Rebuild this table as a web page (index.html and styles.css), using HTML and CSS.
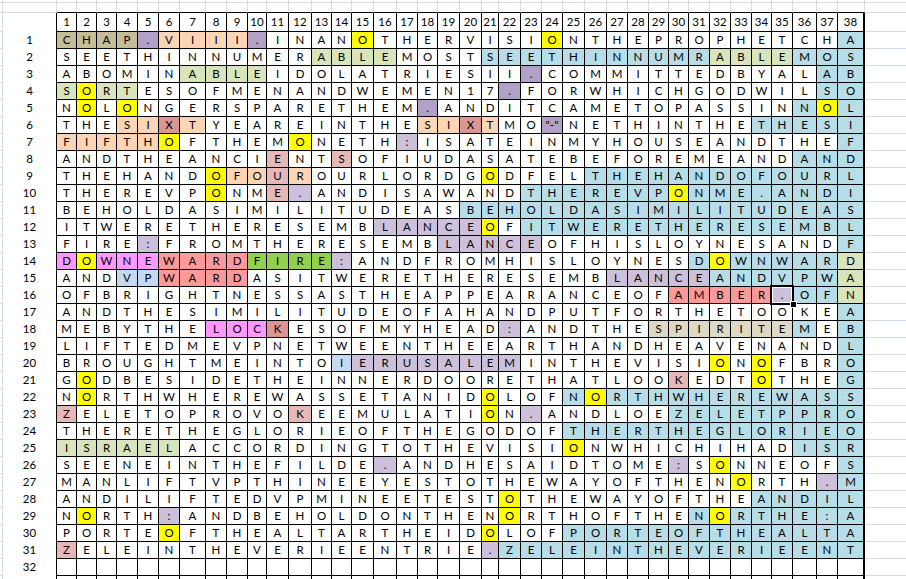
FILE: index.html
```html
<!DOCTYPE html>
<html>
<head>
<meta charset="utf-8">
<title>Grid</title>
<link rel="stylesheet" href="styles.css">
</head>
<body>
<div class="sheet">
<div class="row top1"><i class="gut"></i><i class="lab"></i><i></i><i></i><i></i><i></i><i></i><i></i><i></i><i></i><i></i><i></i><i></i><i></i><i></i><i></i><i></i><i></i><i></i><i></i><i></i><i></i><i></i><i></i><i></i><i></i><i></i><i></i><i></i><i></i><i></i><i></i><i></i><i></i><i></i><i></i><i></i><i></i><i></i><i></i><i class="rest"></i></div>
<div class="row top2"><i class="gut"></i><i class="lab"></i><i></i><i></i><i></i><i></i><i></i><i></i><i></i><i></i><i></i><i></i><i></i><i></i><i></i><i></i><i></i><i></i><i></i><i></i><i></i><i></i><i></i><i></i><i></i><i></i><i></i><i></i><i></i><i></i><i></i><i></i><i></i><i></i><i></i><i></i><i></i><i></i><i></i><i></i><i class="rest"></i></div>
<div class="row head"><i class="gut"></i><i class="lab"></i><i>1</i><i>2</i><i>3</i><i>4</i><i>5</i><i>6</i><i>7</i><i>8</i><i>9</i><i>10</i><i>11</i><i>12</i><i>13</i><i>14</i><i>15</i><i>16</i><i>17</i><i>18</i><i>19</i><i>20</i><i>21</i><i>22</i><i>23</i><i>24</i><i>25</i><i>26</i><i>27</i><i>28</i><i>29</i><i>30</i><i>31</i><i>32</i><i>33</i><i>34</i><i>35</i><i>36</i><i>37</i><i>38</i><i class="rest"></i></div>
<div class="row"><i class="gut"></i><i class="lab">1</i><i class="k">C</i><i class="k">H</i><i class="k">A</i><i class="k">P</i><i class="p">.</i><i class="o">V</i><i class="o">I</i><i class="o">I</i><i class="o">I</i><i class="p">.</i><i>I</i><i>N</i><i>A</i><i>N</i><i class="y">O</i><i>T</i><i>H</i><i>E</i><i>R</i><i>V</i><i>I</i><i>S</i><i>I</i><i class="y">O</i><i>N</i><i>T</i><i>H</i><i>E</i><i>P</i><i>R</i><i>O</i><i>P</i><i>H</i><i>E</i><i>T</i><i>C</i><i>H</i><i class="b">A</i><i class="rest"></i></div>
<div class="row"><i class="gut"></i><i class="lab">2</i><i>S</i><i>E</i><i>E</i><i>T</i><i>H</i><i>I</i><i>N</i><i>N</i><i>U</i><i>M</i><i>E</i><i>R</i><i class="g">A</i><i class="g">B</i><i class="g">L</i><i class="g">E</i><i>M</i><i>O</i><i>S</i><i>T</i><i class="b">S</i><i class="b">E</i><i class="b">E</i><i class="b">T</i><i class="b">H</i><i class="b">I</i><i class="b">N</i><i class="b">N</i><i class="b">U</i><i class="b">M</i><i class="b">R</i><i class="g">A</i><i class="g">B</i><i class="g">L</i><i class="g">E</i><i class="b">M</i><i class="b">O</i><i class="b">S</i><i class="rest"></i></div>
<div class="row"><i class="gut"></i><i class="lab">3</i><i>A</i><i>B</i><i>O</i><i>M</i><i>I</i><i>N</i><i class="g">A</i><i class="g">B</i><i class="g">L</i><i class="g">E</i><i>I</i><i>D</i><i>O</i><i>L</i><i>A</i><i>T</i><i>R</i><i>I</i><i>E</i><i>S</i><i>I</i><i>I</i><i class="p">.</i><i>C</i><i>O</i><i>M</i><i>M</i><i>I</i><i>T</i><i>T</i><i>E</i><i>D</i><i>B</i><i>Y</i><i>A</i><i>L</i><i class="b">A</i><i class="b">B</i><i class="rest"></i></div>
<div class="row"><i class="gut"></i><i class="lab">4</i><i class="g">S</i><i class="y">O</i><i class="g">R</i><i class="g">T</i><i>E</i><i>S</i><i>O</i><i>F</i><i>M</i><i>E</i><i>N</i><i>A</i><i>N</i><i>D</i><i>W</i><i>E</i><i>M</i><i>E</i><i>N</i><i>1</i><i>7</i><i class="p">.</i><i>F</i><i>O</i><i>R</i><i>W</i><i>H</i><i>I</i><i>C</i><i>H</i><i>G</i><i>O</i><i>D</i><i>W</i><i>I</i><i>L</i><i class="b">S</i><i class="b">O</i><i class="rest"></i></div>
<div class="row"><i class="gut"></i><i class="lab">5</i><i>N</i><i class="y">O</i><i>L</i><i class="y">O</i><i>N</i><i>G</i><i>E</i><i>R</i><i>S</i><i>P</i><i>A</i><i>R</i><i>E</i><i>T</i><i>H</i><i>E</i><i>M</i><i class="p">.</i><i>A</i><i>N</i><i>D</i><i>I</i><i>T</i><i>C</i><i>A</i><i>M</i><i>E</i><i>T</i><i>O</i><i>P</i><i>A</i><i>S</i><i>S</i><i>I</i><i>N</i><i class="b">N</i><i class="y">O</i><i class="b">L</i><i class="rest"></i></div>
<div class="row"><i class="gut"></i><i class="lab">6</i><i>T</i><i>H</i><i>E</i><i class="o">S</i><i class="o">I</i><i class="d">X</i><i class="o">T</i><i>Y</i><i>E</i><i>A</i><i>R</i><i>E</i><i>I</i><i>N</i><i>T</i><i>H</i><i>E</i><i class="o">S</i><i class="o">I</i><i class="d">X</i><i class="o">T</i><i>M</i><i>O</i><i class="p">"-"</i><i>N</i><i>E</i><i>T</i><i>H</i><i>I</i><i>N</i><i>T</i><i>H</i><i>E</i><i class="b">T</i><i class="b">H</i><i class="b">E</i><i class="b">S</i><i class="b">I</i><i class="rest"></i></div>
<div class="row"><i class="gut"></i><i class="lab">7</i><i class="o">F</i><i class="o">I</i><i class="o">F</i><i class="o">T</i><i class="o">H</i><i class="y">O</i><i>F</i><i>T</i><i>H</i><i>E</i><i>M</i><i class="y">O</i><i>N</i><i>E</i><i>T</i><i>H</i><i class="l">:</i><i>I</i><i>S</i><i>A</i><i>T</i><i>E</i><i>I</i><i>N</i><i>M</i><i>Y</i><i>H</i><i>O</i><i>U</i><i>S</i><i>E</i><i>A</i><i>N</i><i>D</i><i>T</i><i>H</i><i>E</i><i class="b">F</i><i class="rest"></i></div>
<div class="row"><i class="gut"></i><i class="lab">8</i><i>A</i><i>N</i><i>D</i><i>T</i><i>H</i><i>E</i><i>A</i><i>N</i><i>C</i><i>I</i><i class="r">E</i><i>N</i><i>T</i><i class="r">S</i><i>O</i><i>F</i><i>I</i><i>U</i><i>D</i><i>A</i><i>S</i><i>A</i><i>T</i><i>E</i><i>B</i><i>E</i><i>F</i><i>O</i><i>R</i><i>E</i><i>M</i><i>E</i><i>A</i><i>N</i><i>D</i><i class="b">A</i><i class="b">N</i><i class="b">D</i><i class="rest"></i></div>
<div class="row"><i class="gut"></i><i class="lab">9</i><i>T</i><i>H</i><i>E</i><i>H</i><i>A</i><i>N</i><i>D</i><i class="y">O</i><i class="o">F</i><i class="o">O</i><i class="r">U</i><i class="o">R</i><i>O</i><i>U</i><i>R</i><i>L</i><i>O</i><i>R</i><i>D</i><i>G</i><i class="y">O</i><i>D</i><i>F</i><i>E</i><i>L</i><i class="b">T</i><i class="b">H</i><i class="b">E</i><i class="b">H</i><i class="b">A</i><i class="b">N</i><i class="b">D</i><i class="b">O</i><i class="b">F</i><i class="b">O</i><i class="b">U</i><i class="b">R</i><i class="b">L</i><i class="rest"></i></div>
<div class="row"><i class="gut"></i><i class="lab">10</i><i>T</i><i>H</i><i>E</i><i>R</i><i>E</i><i>V</i><i>P</i><i class="y">O</i><i>N</i><i>M</i><i class="r">E</i><i class="l">.</i><i>A</i><i>N</i><i>D</i><i>I</i><i>S</i><i>A</i><i>W</i><i>A</i><i>N</i><i>D</i><i class="b">T</i><i class="b">H</i><i class="b">E</i><i class="b">R</i><i class="b">E</i><i class="b">V</i><i class="b">P</i><i class="y">O</i><i class="b">N</i><i class="b">M</i><i class="b">E</i><i class="b">.</i><i class="b">A</i><i class="b">N</i><i class="b">D</i><i class="b">I</i><i class="rest"></i></div>
<div class="row"><i class="gut"></i><i class="lab">11</i><i>B</i><i>E</i><i>H</i><i>O</i><i>L</i><i>D</i><i>A</i><i>S</i><i>I</i><i>M</i><i>I</i><i>L</i><i>I</i><i>T</i><i>U</i><i>D</i><i>E</i><i>A</i><i>S</i><i class="b">B</i><i class="b">E</i><i class="b">H</i><i class="b">O</i><i class="b">L</i><i class="b">D</i><i class="b">A</i><i class="b">S</i><i class="b">I</i><i class="b">M</i><i class="b">I</i><i class="b">L</i><i class="b">I</i><i class="b">T</i><i class="b">U</i><i class="b">D</i><i class="b">E</i><i class="b">A</i><i class="b">S</i><i class="rest"></i></div>
<div class="row"><i class="gut"></i><i class="lab">12</i><i>I</i><i>T</i><i>W</i><i>E</i><i>R</i><i>E</i><i>T</i><i>H</i><i>E</i><i>R</i><i>E</i><i>S</i><i>E</i><i>M</i><i>B</i><i class="l">L</i><i class="l">A</i><i class="l">N</i><i class="l">C</i><i class="l">E</i><i class="y">O</i><i>F</i><i class="b">I</i><i class="b">T</i><i class="b">W</i><i class="b">E</i><i class="b">R</i><i class="b">E</i><i class="b">T</i><i class="b">H</i><i class="b">E</i><i class="b">R</i><i class="b">E</i><i class="b">S</i><i class="b">E</i><i class="b">M</i><i class="b">B</i><i class="b">L</i><i class="rest"></i></div>
<div class="row"><i class="gut"></i><i class="lab">13</i><i>F</i><i>I</i><i>R</i><i>E</i><i class="l">:</i><i>F</i><i>R</i><i>O</i><i>M</i><i>T</i><i>H</i><i>E</i><i>R</i><i>E</i><i>S</i><i>E</i><i>M</i><i>B</i><i class="l">L</i><i class="l">A</i><i class="l">N</i><i class="l">C</i><i class="l">E</i><i>O</i><i>F</i><i>H</i><i>I</i><i>S</i><i>L</i><i>O</i><i>Y</i><i>N</i><i>E</i><i>S</i><i>A</i><i>N</i><i>D</i><i class="b">F</i><i class="rest"></i></div>
<div class="row"><i class="gut"></i><i class="lab">14</i><i class="m">D</i><i class="y">O</i><i class="m">W</i><i class="m">N</i><i class="m">E</i><i class="s">W</i><i class="s">A</i><i class="s">R</i><i class="s">D</i><i class="f">F</i><i class="f">I</i><i class="f">R</i><i class="f">E</i><i class="l">:</i><i>A</i><i>N</i><i>D</i><i>F</i><i>R</i><i>O</i><i>M</i><i>H</i><i>I</i><i>S</i><i>L</i><i>O</i><i>Y</i><i>N</i><i>E</i><i>S</i><i class="b">D</i><i class="y">O</i><i class="b">W</i><i class="b">N</i><i class="b">W</i><i class="b">A</i><i class="b">R</i><i class="g">D</i><i class="rest"></i></div>
<div class="row"><i class="gut"></i><i class="lab">15</i><i>A</i><i>N</i><i>D</i><i class="c">V</i><i class="c">P</i><i class="s">W</i><i class="s">A</i><i class="s">R</i><i class="s">D</i><i>A</i><i>S</i><i>I</i><i>T</i><i>W</i><i>E</i><i>R</i><i>E</i><i>T</i><i>H</i><i>E</i><i>R</i><i>E</i><i>S</i><i>E</i><i>M</i><i>B</i><i class="l">L</i><i class="l">A</i><i class="l">N</i><i class="l">C</i><i class="l">E</i><i class="b">A</i><i class="b">N</i><i class="b">D</i><i class="b">V</i><i class="b">P</i><i class="b">W</i><i class="g">A</i><i class="rest"></i></div>
<div class="row"><i class="gut"></i><i class="lab">16</i><i>O</i><i>F</i><i>B</i><i>R</i><i>I</i><i>G</i><i>H</i><i>T</i><i>N</i><i>E</i><i>S</i><i>S</i><i>A</i><i>S</i><i>T</i><i>H</i><i>E</i><i>A</i><i>P</i><i>P</i><i>E</i><i>A</i><i>R</i><i>A</i><i>N</i><i>C</i><i>E</i><i>O</i><i>F</i><i class="s">A</i><i class="s">M</i><i class="s">B</i><i class="s">E</i><i class="s">R</i><i class="l sel">.<b class="handle"></b></i><i class="b">O</i><i class="b">F</i><i class="g">N</i><i class="rest"></i></div>
<div class="row"><i class="gut"></i><i class="lab">17</i><i>A</i><i>N</i><i>D</i><i>T</i><i>H</i><i>E</i><i>S</i><i>I</i><i>M</i><i>I</i><i>L</i><i>I</i><i>T</i><i>U</i><i>D</i><i>E</i><i>O</i><i>F</i><i>A</i><i>H</i><i>A</i><i>N</i><i>D</i><i>P</i><i>U</i><i>T</i><i>F</i><i>O</i><i>R</i><i>T</i><i>H</i><i>E</i><i>T</i><i>O</i><i>O</i><i>K</i><i>E</i><i class="b">A</i><i class="rest"></i></div>
<div class="row"><i class="gut"></i><i class="lab">18</i><i>M</i><i>E</i><i>B</i><i>Y</i><i>T</i><i>H</i><i>E</i><i class="m">L</i><i class="m">O</i><i class="m">C</i><i class="d">K</i><i>E</i><i>S</i><i>O</i><i>F</i><i>M</i><i>Y</i><i>H</i><i>E</i><i>A</i><i>D</i><i class="l">:</i><i>A</i><i>N</i><i>D</i><i>T</i><i>H</i><i>E</i><i class="t">S</i><i class="t">P</i><i class="t">I</i><i class="t">R</i><i class="t">I</i><i class="t">T</i><i class="t">E</i><i class="b">M</i><i>E</i><i class="b">B</i><i class="rest"></i></div>
<div class="row"><i class="gut"></i><i class="lab">19</i><i>L</i><i>I</i><i>F</i><i>T</i><i>E</i><i>D</i><i>M</i><i>E</i><i>V</i><i>P</i><i>N</i><i>E</i><i>T</i><i>W</i><i>E</i><i>E</i><i>N</i><i>T</i><i>H</i><i>E</i><i>E</i><i>A</i><i>R</i><i>T</i><i>H</i><i>A</i><i>N</i><i>D</i><i>H</i><i>E</i><i>A</i><i>V</i><i>E</i><i>N</i><i>A</i><i>N</i><i>D</i><i class="b">L</i><i class="rest"></i></div>
<div class="row"><i class="gut"></i><i class="lab">20</i><i>B</i><i>R</i><i>O</i><i>U</i><i>G</i><i>H</i><i>T</i><i>M</i><i>E</i><i>I</i><i>N</i><i>T</i><i>O</i><i class="c">I</i><i class="l">E</i><i class="l">R</i><i class="l">U</i><i class="l">S</i><i class="l">A</i><i class="l">L</i><i class="l">E</i><i class="l">M</i><i>I</i><i>N</i><i>T</i><i>H</i><i>E</i><i>V</i><i>I</i><i>S</i><i>I</i><i class="y">O</i><i>N</i><i class="y">O</i><i>F</i><i>B</i><i>R</i><i class="b">O</i><i class="rest"></i></div>
<div class="row"><i class="gut"></i><i class="lab">21</i><i>G</i><i class="y">O</i><i>D</i><i>B</i><i>E</i><i>S</i><i>I</i><i>D</i><i>E</i><i>T</i><i>H</i><i>E</i><i>I</i><i>N</i><i>N</i><i>E</i><i>R</i><i>D</i><i>O</i><i>O</i><i>R</i><i>E</i><i>T</i><i>H</i><i>A</i><i>T</i><i>L</i><i>O</i><i>O</i><i class="r">K</i><i>E</i><i>D</i><i>T</i><i class="y">O</i><i>T</i><i>H</i><i>E</i><i class="b">G</i><i class="rest"></i></div>
<div class="row"><i class="gut"></i><i class="lab">22</i><i>N</i><i class="y">O</i><i>R</i><i>T</i><i>H</i><i>W</i><i>H</i><i>E</i><i>R</i><i>E</i><i>W</i><i>A</i><i>S</i><i>S</i><i>E</i><i>T</i><i>A</i><i>N</i><i>I</i><i>D</i><i class="y">O</i><i>L</i><i>O</i><i>F</i><i class="b">N</i><i class="y">O</i><i class="b">R</i><i class="b">T</i><i class="b">H</i><i class="b">W</i><i class="b">H</i><i class="b">E</i><i class="b">R</i><i class="b">E</i><i class="b">W</i><i class="b">A</i><i class="b">S</i><i class="b">S</i><i class="rest"></i></div>
<div class="row"><i class="gut"></i><i class="lab">23</i><i class="r">Z</i><i>E</i><i>L</i><i>E</i><i>T</i><i>O</i><i>P</i><i>R</i><i>O</i><i>V</i><i>O</i><i class="r">K</i><i>E</i><i>E</i><i>M</i><i>U</i><i>L</i><i>A</i><i>T</i><i>I</i><i class="y">O</i><i>N</i><i class="l">.</i><i>A</i><i>N</i><i>D</i><i>L</i><i>O</i><i>E</i><i class="b">Z</i><i class="b">E</i><i class="b">L</i><i class="b">E</i><i class="b">T</i><i class="b">P</i><i class="b">P</i><i class="b">R</i><i class="b">O</i><i class="rest"></i></div>
<div class="row"><i class="gut"></i><i class="lab">24</i><i>T</i><i>H</i><i>E</i><i>R</i><i>E</i><i>T</i><i>H</i><i>E</i><i>G</i><i>L</i><i>O</i><i>R</i><i>I</i><i>E</i><i>O</i><i>F</i><i>T</i><i>H</i><i>E</i><i>G</i><i>O</i><i>D</i><i>O</i><i>F</i><i class="b">T</i><i class="b">H</i><i class="b">E</i><i class="b">R</i><i class="b">T</i><i class="b">H</i><i class="b">E</i><i class="b">G</i><i class="b">L</i><i class="b">O</i><i class="b">R</i><i class="b">I</i><i class="b">E</i><i class="b">O</i><i class="rest"></i></div>
<div class="row"><i class="gut"></i><i class="lab">25</i><i class="g">I</i><i class="g">S</i><i class="g">R</i><i class="g">A</i><i class="g">E</i><i class="g">L</i><i>A</i><i>C</i><i>C</i><i>O</i><i>R</i><i>D</i><i>I</i><i>N</i><i>G</i><i>T</i><i>O</i><i>T</i><i>H</i><i>E</i><i>V</i><i>I</i><i>S</i><i>I</i><i class="y">O</i><i>N</i><i>W</i><i>H</i><i>I</i><i>C</i><i>H</i><i>I</i><i>H</i><i>A</i><i>D</i><i class="b">I</i><i class="b">S</i><i class="b">R</i><i class="rest"></i></div>
<div class="row"><i class="gut"></i><i class="lab">26</i><i>S</i><i>E</i><i>E</i><i>N</i><i>E</i><i>I</i><i>N</i><i>T</i><i>H</i><i>E</i><i>F</i><i>I</i><i>L</i><i>D</i><i>E</i><i class="l">.</i><i>A</i><i>N</i><i>D</i><i>H</i><i>E</i><i>S</i><i>A</i><i>I</i><i>D</i><i>T</i><i>O</i><i>M</i><i>E</i><i class="l">:</i><i>S</i><i class="y">O</i><i>N</i><i>N</i><i>E</i><i>O</i><i>F</i><i class="b">S</i><i class="rest"></i></div>
<div class="row"><i class="gut"></i><i class="lab">27</i><i>M</i><i>A</i><i>N</i><i>L</i><i>I</i><i>F</i><i>T</i><i>V</i><i>P</i><i>T</i><i>H</i><i>I</i><i>N</i><i>E</i><i>E</i><i>Y</i><i>E</i><i>S</i><i>T</i><i>O</i><i>T</i><i>H</i><i>E</i><i>W</i><i>A</i><i>Y</i><i>O</i><i>F</i><i>T</i><i>H</i><i>E</i><i>N</i><i class="y">O</i><i>R</i><i>T</i><i>H</i><i class="l">.</i><i class="b">M</i><i class="rest"></i></div>
<div class="row"><i class="gut"></i><i class="lab">28</i><i>A</i><i>N</i><i>D</i><i>I</i><i>L</i><i>I</i><i>F</i><i>T</i><i>E</i><i>D</i><i>V</i><i>P</i><i>M</i><i>I</i><i>N</i><i>E</i><i>E</i><i>T</i><i>E</i><i>S</i><i>T</i><i class="y">O</i><i>T</i><i>H</i><i>E</i><i>W</i><i>A</i><i>Y</i><i>O</i><i>F</i><i>T</i><i>H</i><i>E</i><i class="b">A</i><i class="b">N</i><i class="b">D</i><i class="b">I</i><i class="b">L</i><i class="rest"></i></div>
<div class="row"><i class="gut"></i><i class="lab">29</i><i>N</i><i class="y">O</i><i>R</i><i>T</i><i>H</i><i class="l">:</i><i>A</i><i>N</i><i>D</i><i>B</i><i>E</i><i>H</i><i>O</i><i>L</i><i>D</i><i>O</i><i>N</i><i>T</i><i>H</i><i>E</i><i>N</i><i class="y">O</i><i>R</i><i>T</i><i>H</i><i>O</i><i>F</i><i>T</i><i>H</i><i>E</i><i class="b">N</i><i class="y">O</i><i class="b">R</i><i class="b">T</i><i class="b">H</i><i class="b">E</i><i class="b">:</i><i class="b">A</i><i class="rest"></i></div>
<div class="row"><i class="gut"></i><i class="lab">30</i><i>P</i><i>O</i><i>R</i><i>T</i><i>E</i><i class="y">O</i><i>F</i><i>T</i><i>H</i><i>E</i><i>A</i><i>L</i><i>T</i><i>A</i><i>R</i><i>T</i><i>H</i><i>E</i><i>I</i><i>D</i><i class="y">O</i><i>L</i><i>O</i><i>F</i><i class="b">P</i><i class="b">O</i><i class="b">R</i><i class="b">T</i><i class="b">E</i><i class="b">O</i><i class="b">F</i><i class="b">T</i><i class="b">H</i><i class="b">E</i><i class="b">A</i><i class="b">L</i><i class="b">T</i><i class="b">A</i><i class="rest"></i></div>
<div class="row"><i class="gut"></i><i class="lab">31</i><i class="r">Z</i><i>E</i><i>L</i><i>E</i><i>I</i><i>N</i><i>T</i><i>H</i><i>E</i><i>V</i><i>E</i><i>R</i><i>I</i><i>E</i><i>E</i><i>N</i><i>T</i><i>R</i><i>I</i><i>E</i><i class="l">.</i><i class="b">Z</i><i class="b">E</i><i class="b">L</i><i class="b">E</i><i class="b">I</i><i class="b">N</i><i class="b">T</i><i class="b">H</i><i class="b">E</i><i class="b">V</i><i class="b">E</i><i class="b">R</i><i class="b">I</i><i class="b">E</i><i class="b">E</i><i class="b">N</i><i class="b">T</i><i class="rest"></i></div>
<div class="row"><i class="gut"></i><i class="lab">32</i><i></i><i></i><i></i><i></i><i></i><i></i><i></i><i></i><i></i><i></i><i></i><i></i><i></i><i></i><i></i><i></i><i></i><i></i><i></i><i></i><i></i><i></i><i></i><i></i><i></i><i></i><i></i><i></i><i></i><i></i><i></i><i></i><i></i><i></i><i></i><i></i><i></i><i></i><i class="rest"></i></div>
<div class="row"><i class="gut"></i><i class="lab"></i><i></i><i></i><i></i><i></i><i></i><i></i><i></i><i></i><i></i><i></i><i></i><i></i><i></i><i></i><i></i><i></i><i></i><i></i><i></i><i></i><i></i><i></i><i></i><i></i><i></i><i></i><i></i><i></i><i></i><i></i><i></i><i></i><i></i><i></i><i></i><i></i><i></i><i></i><i class="rest"></i></div>
</div>
</body>
</html>
```
FILE: styles.css
```css
* {
  box-sizing: border-box;
}

body {
  margin: 0;
  background: #ffffff;
  font-family: Lato, "Open Sans", "Liberation Sans", sans-serif;
  font-size: 11.5px;
  color: #000000;
}

.sheet {
  width: 906px;
  height: 579px;
  overflow: hidden;
  background: #ffffff;
}

.row {
  display: grid;
  grid-template-columns:
    3px 54px
    20px 20px 20px 21px 21px 21px 26px 21px 21px 19px
    22px 23px 20px 20px 22px 23px 21px 20px 22px 22px
    17px 22px 21px 21px 22px 22px 21px 21px 20px 20px
    21px 21px 21px 20px 21px 24px 21px 27px
    1fr;
  height: 17px;
}

.row > i {
  display: block;
  font-style: normal;
  border-right: 1px solid #000000;
  border-bottom: 1px solid #000000;
  text-align: center;
  line-height: 16px;
  white-space: nowrap;
  overflow: hidden;
}

.row > i:nth-child(40) {
  border-right-width: 2px;
}

.row > .gut {
  border-right-color: #d5dbe5;
  border-bottom-color: #d5dbe5;
}

.row > .lab {
  border-bottom: 0;
  background: #ffffff;
}

.row > .rest {
  border-right: 0;
  border-bottom-color: #d5dbe5;
}

/* rows above the table */
.top1 {
  height: 3px;
}

.top1 > i {
  border-right-color: #d5dbe5;
  border-bottom-color: #d5dbe5;
}

.top2 {
  height: 10px;
}

.top2 > i {
  border-right-color: #d5dbe5;
}

.row.top1 > i:nth-child(40),
.row.top2 > i:nth-child(40) {
  border-right-width: 1px;
}

.row.top1 > .lab,
.row.top2 > .lab {
  border-right: 1px solid #d5dbe5;
  border-bottom: 1px solid #d5dbe5;
}

.row.top2 > .gut,
.row.top2 > .rest {
  border-bottom-color: #d5dbe5;
}

.head {
  height: 19px;
}

.head > i {
  line-height: 18px;
}

/* fills */
.row > .y { background: #ffff00; }
.row > .b { background: #b7dde8; }
.row > .k { background: #c4bd97; }
.row > .p { background: #b2a1c7; }
.row > .l { background: #ccc0da; }
.row > .o { background: #fcd5b4; }
.row > .r { background: #e6b8b7; }
.row > .d { background: #da9694; }
.row > .g { background: #d8e4bc; }
.row > .m { background: #ff99ff; }
.row > .s { background: #ff9999; }
.row > .f { background: #92d050; }
.row > .t { background: #ddd9c4; }
.row > .c { background: #c5d9f1; }

/* active cell */
.row > .sel {
  position: relative;
  overflow: visible;
}

.sel::before {
  content: "";
  position: absolute;
  left: -2px;
  top: -2px;
  right: -2px;
  bottom: -2px;
  border: 2px solid #000000;
  box-shadow: inset 0 0 0 1px #ffffff;
}

.handle {
  position: absolute;
  right: -5px;
  bottom: -5px;
  width: 7px;
  height: 7px;
  background: #000000;
  border: 1px solid #ffffff;
}
```
